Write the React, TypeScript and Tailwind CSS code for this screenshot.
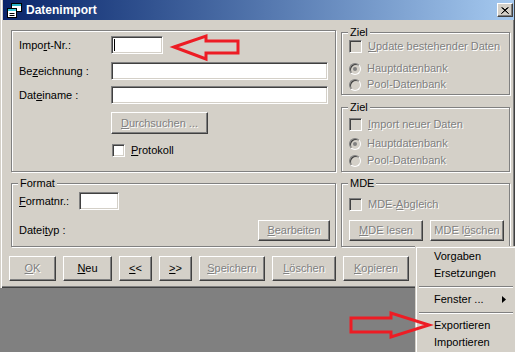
import type { ReactNode } from "react";

const raised =
  "border border-t-white border-l-white border-r-[#404040] border-b-[#404040] shadow-[inset_-1px_-1px_0_#808080]";
const sunken =
  "border border-t-[#808080] border-l-[#808080] border-r-white border-b-white shadow-[inset_1px_1px_0_#404040,inset_-1px_-1px_0_#d4d0c8]";
const etched = "border border-[#808080] shadow-[inset_1px_1px_0_#fff,1px_1px_0_#fff]";
const grayText = "text-[#808080] [text-shadow:1px_1px_0_#fff]";

const Button = ({
  children,
  disabled,
  className = "",
}: {
  children: ReactNode;
  disabled?: boolean;
  className?: string;
}) => (
  <div
    className={`${raised} bg-[#d4d0c8] flex items-center justify-center shrink-0 ${
      disabled ? grayText : "text-black"
    } ${className}`}
  >
    {children}
  </div>
);

const Group = ({
  label,
  className = "",
  children,
}: {
  label?: string;
  className?: string;
  children?: ReactNode;
}) => (
  <div className={`relative ${etched} ${className}`}>
    {label && (
      <span className="absolute -top-[7px] left-[6px] px-[2px] bg-[#d4d0c8] leading-[13px] text-black">
        {label}
      </span>
    )}
    {children}
  </div>
);

const Check = ({ disabled, children }: { disabled?: boolean; children: ReactNode }) => (
  <div className="flex items-center gap-[6px] h-[13px]">
    <div className={`${sunken} w-[13px] h-[13px] shrink-0 ${disabled ? "bg-[#d4d0c8]" : "bg-white"}`} />
    <span className={disabled ? grayText : "text-black"}>{children}</span>
  </div>
);

const Radio = ({ checked, children }: { checked?: boolean; children: ReactNode }) => (
  <div className="flex items-center gap-[6px] h-[13px]">
    <div className="w-[12px] h-[12px] shrink-0 rounded-full border border-t-[#808080] border-l-[#808080] border-r-white border-b-white bg-[#d4d0c8] flex items-center justify-center shadow-[inset_1px_1px_0_#404040]">
      {checked && <div className="w-[4px] h-[4px] rounded-full bg-[#808080]" />}
    </div>
    <span className={grayText}>{children}</span>
  </div>
);

const TitleIcon = () => (
  <svg width="16" height="15" viewBox="0 0 16 15" className="shrink-0">
    <rect x="4.5" y="0.5" width="10" height="8" fill="#fff" stroke="#000" />
    <rect x="5" y="1" width="9" height="2" fill="#2ab5c8" />
    <rect x="0.5" y="5.5" width="9" height="9" fill="#fff" stroke="#000" />
    <rect x="1" y="6" width="8" height="2" fill="#38c8d8" />
    <path d="M2.5 10.5h5M2.5 12.5h5" stroke="#000" />
  </svg>
);

const MenuSep = () => (
  <div className="h-[9px] flex flex-col justify-center px-[1px]">
    <div className="h-px bg-[#808080]" />
    <div className="h-px bg-white" />
  </div>
);

export default function App() {
  return (
    <div className="relative w-[515px] h-[352px] overflow-hidden bg-[#808080] font-['Liberation_Sans',Arial,sans-serif] text-[11px] leading-[13px] text-black">
      {/* Window */}
      <div className="w-[515px] h-[288px] bg-[#d4d0c8] shadow-[inset_1px_0_0_#d4d0c8,inset_2px_0_0_#fff,inset_-1px_-1px_0_#404040,inset_-2px_-2px_0_#808080] flex flex-col">
        {/* Title bar */}
        <div className="ml-[3px] mr-[1px] h-[20px] bg-gradient-to-r from-[#0a246a] to-[#a6caf0] flex items-center pl-[4px] pr-[1px]">
          <TitleIcon />
          <span className="ml-[3px] text-white font-bold text-[12px]">Datenimport</span>
          <div className={`ml-auto ${raised} bg-[#d4d0c8] w-[16px] h-[14px] flex items-center justify-center`}>
            <svg width="8" height="7" viewBox="0 0 8 7">
              <path d="M0.5 0.5l7 6M7.5 0.5l-7 6M1.5 0.5l6 6M6.5 0.5l-6 6" stroke="#000" strokeWidth="1" />
            </svg>
          </div>
        </div>

        {/* Groups */}
        <div className="flex gap-[5px] pl-[11px] mt-[10px]">
          <div className="w-[325px] flex flex-col">
            <Group className="h-[142px] pt-[5px] pl-[7px]">
              <div className="flex items-center">
                <span className="w-[92px]">
                  Impo<u>r</u>t-Nr.:
                </span>
                <div className={`${sunken} bg-white w-[52px] h-[18px] flex items-center pl-[2px]`}>
                  <div className="w-px h-[12px] bg-black" />
                </div>
              </div>
              <div className="flex items-center mt-[8px]">
                <span className="w-[92px]">
                  Be<u>z</u>eichnung :
                </span>
                <div className={`${sunken} bg-white w-[217px] h-[18px]`} />
              </div>
              <div className="flex items-center mt-[6px]">
                <span className="w-[92px]">
                  Dat<u>e</u>iname :
                </span>
                <div className={`${sunken} bg-white w-[217px] h-[18px]`} />
              </div>
              <Button disabled className="ml-[92px] mt-[8px] w-[97px] h-[22px]">
                <span>
                  <u>D</u>urchsuchen ...
                </span>
              </Button>
              <div className="ml-[93px] mt-[10px]">
                <Check>
                  <u>P</u>rotokoll
                </Check>
              </div>
            </Group>

            <Group label="Format" className="mt-[11px] h-[64px] pt-[8px] pl-[7px] pr-[5px]">
              <div className="flex items-center">
                <span className="w-[60px]">
                  <u>F</u>ormatnr.:
                </span>
                <div className={`${sunken} bg-white w-[40px] h-[18px]`} />
              </div>
              <div className="flex items-center justify-between mt-[10px]">
                <span>
                  Datei<u>t</u>yp :
                </span>
                <Button disabled className="w-[72px] h-[21px]">
                  <span>
                    <u>B</u>earbeiten
                  </span>
                </Button>
              </div>
            </Group>
          </div>

          <div className="w-[169px] flex flex-col pt-[2px]">
            <Group label="Ziel" className="h-[63px] pt-[7px] pl-[7px]">
              <Check disabled>
                <u>U</u>pdate bestehender Daten
              </Check>
              <div className="mt-[9px]">
                <Radio checked>Hauptdatenbank</Radio>
              </div>
              <div className="mt-[3px]">
                <Radio>Pool-Datenbank</Radio>
              </div>
            </Group>

            <Group label="Ziel" className="mt-[12px] h-[65px] pt-[10px] pl-[7px]">
              <Check disabled>
                <u>I</u>mport neuer Daten
              </Check>
              <div className="mt-[6px]">
                <Radio checked>Hauptdatenbank</Radio>
              </div>
              <div className="mt-[4px]">
                <Radio>Pool-Datenbank</Radio>
              </div>
            </Group>

            <Group label="MDE" className="mt-[11px] h-[64px] pt-[14px] pl-[7px]">
              <Check disabled>
                MDE-<u>A</u>bgleich
              </Check>
              <div className="flex gap-[7px] mt-[9px]">
                <Button disabled className="w-[74px] h-[21px]">
                  <span>
                    <u>M</u>DE lesen
                  </span>
                </Button>
                <Button disabled className="w-[74px] h-[21px]">
                  <span>
                    MDE l<u>ö</u>schen
                  </span>
                </Button>
              </div>
            </Group>
          </div>
        </div>

        {/* Buttons */}
        <div className="flex pl-[9px] mt-[9px] gap-[7px]">
          <Button disabled className="w-[47px] h-[25px]">
            <span>
              <u>O</u>K
            </span>
          </Button>
          <Button className="w-[49px] h-[25px]">
            <span>
              <u>N</u>eu
            </span>
          </Button>
          <Button className="w-[33px] h-[25px]">
            <span>
              <u>&lt;</u>&lt;
            </span>
          </Button>
          <Button className="w-[33px] h-[25px]">
            <span>
              <u>&gt;</u>&gt;
            </span>
          </Button>
          <Button disabled className="w-[66px] h-[25px]">
            <span>
              <u>S</u>peichern
            </span>
          </Button>
          <Button disabled className="w-[64px] h-[25px]">
            <span>
              <u>L</u>öschen
            </span>
          </Button>
          <Button disabled className="w-[66px] h-[25px]">
            <span>
              <u>K</u>opieren
            </span>
          </Button>
        </div>
      </div>

      {/* Context menu */}
      <div className="absolute left-[415px] top-[246px] w-[102px] h-[110px] bg-[#d4d0c8] border border-t-[#d4d0c8] border-l-[#d4d0c8] border-r-[#404040] border-b-[#404040] shadow-[inset_1px_1px_0_#fff,inset_-1px_-1px_0_#808080] pt-[1px] px-[2px]">
        <div className="h-[17px] flex items-center pl-[16px]">Vorgaben</div>
        <div className="h-[17px] flex items-center pl-[16px]">Ersetzungen</div>
        <MenuSep />
        <div className="h-[17px] flex items-center pl-[16px] pr-[8px]">
          <span>Fenster ...</span>
          <svg width="4" height="7" viewBox="0 0 4 7" className="ml-auto">
            <path d="M0 0L4 3.5L0 7Z" fill="#000" />
          </svg>
        </div>
        <MenuSep />
        <div className="h-[17px] flex items-center pl-[16px]">Exportieren</div>
        <div className="h-[17px] flex items-center pl-[16px]">Importieren</div>
      </div>

      {/* Red annotation arrows */}
      <svg className="absolute left-0 top-0 pointer-events-none" width="515" height="352">
        <polygon
          points="174,47 206,36 206,41 238,41 238,53 206,53 206,59"
          fill="none"
          stroke="#ed1c24"
          strokeWidth="3"
          strokeLinejoin="miter"
        />
        <polygon
          points="351,318 391,318 391,313 429,325 391,337 391,332 351,332"
          fill="none"
          stroke="#ed1c24"
          strokeWidth="3"
          strokeLinejoin="miter"
        />
      </svg>
    </div>
  );
}
